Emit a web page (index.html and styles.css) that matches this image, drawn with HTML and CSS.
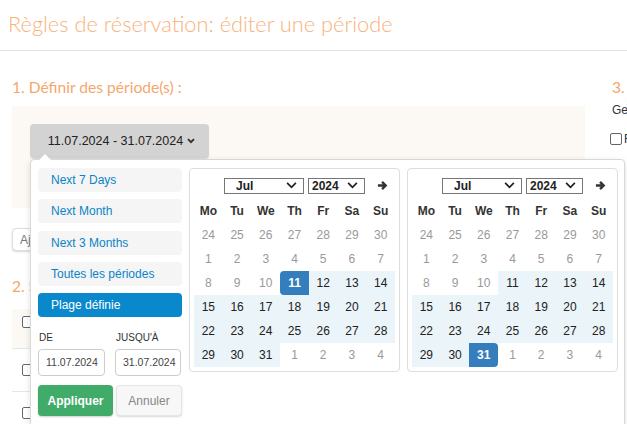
FILE: index.html
```html
<!DOCTYPE html>
<html lang="fr">
<head>
<meta charset="utf-8">
<title>Règles de réservation</title>
<link rel="stylesheet" href="styles.css">
</head>
<body>
<header class="page-head">
  <h1 class="page-title">Règles de réservation: éditer une période</h1>
</header>
<div class="main">
  <div class="col-left">
    <h2 class="step">1. Définir des période(s) :</h2>
    <div class="panel">
      <button class="date-btn">11.07.2024 - 31.07.2024 <svg class="caret" viewBox="0 0 10 8" width="8" height="6"><path d="M1 1.5 L5 5.5 L9 1.5" fill="none" stroke="#333" stroke-width="2.6"/></svg></button>
    </div>
    <button class="add-btn">Ajouter</button>
    <h2 class="step step2">2. Sélectionner</h2>
    <div class="table">
      <div class="trow thead"><span class="cb"></span></div>
      <div class="trow"><span class="cb"></span></div>
      <div class="trow"><span class="cb"></span></div>
    </div>
  </div>
  <div class="col-right">
    <h2 class="step">3.</h2>
    <p class="gen">Ge</p>
    <label class="chk"><span class="cb"></span>F</label>
  </div>

  <div class="picker">
    <div class="ranges">
      <ul class="range-list">
        <li class="range">Next 7 Days</li>
        <li class="range">Next Month</li>
        <li class="range">Next 3 Months</li>
        <li class="range">Toutes les périodes</li>
        <li class="range active">Plage définie</li>
      </ul>
      <div class="inputs">
        <div class="field"><span class="lbl">DE</span><span class="inp">11.07.2024</span></div>
        <div class="field"><span class="lbl">JUSQU'À</span><span class="inp">31.07.2024</span></div>
      </div>
      <div class="actions">
        <button class="btn-apply">Appliquer</button>
        <button class="btn-cancel">Annuler</button>
      </div>
    </div>

    <div class="cal">
      <div class="cal-head">
        <span class="sel sel-month">Jul<svg class="sel-chev" viewBox="0 0 12 8" width="11" height="7"><path d="M1 1 L6 6 L11 1" fill="none" stroke="#222" stroke-width="2"/></svg></span>
        <span class="sel sel-year">2024<svg class="sel-chev" viewBox="0 0 12 8" width="11" height="7"><path d="M1 1 L6 6 L11 1" fill="none" stroke="#222" stroke-width="2"/></svg></span>
        <svg class="next" viewBox="0 0 12 12" width="11" height="11"><path d="M1 6 H9 M5.5 2 L9.5 6 L5.5 10" fill="none" stroke="#333" stroke-width="2.6" stroke-linejoin="miter"/></svg>
      </div>
      <div class="grid">
        <span class="dow">Mo</span><span class="dow">Tu</span><span class="dow">We</span><span class="dow">Th</span><span class="dow">Fr</span><span class="dow">Sa</span><span class="dow">Su</span>
        <span class="d off">24</span><span class="d off">25</span><span class="d off">26</span><span class="d off">27</span><span class="d off">28</span><span class="d off">29</span><span class="d off">30</span>
        <span class="d off">1</span><span class="d off">2</span><span class="d off">3</span><span class="d off">4</span><span class="d off">5</span><span class="d off">6</span><span class="d off">7</span>
        <span class="d off">8</span><span class="d off">9</span><span class="d off">10</span><span class="d sel-start">11</span><span class="d in">12</span><span class="d in">13</span><span class="d in">14</span>
        <span class="d in">15</span><span class="d in">16</span><span class="d in">17</span><span class="d in">18</span><span class="d in">19</span><span class="d in">20</span><span class="d in">21</span>
        <span class="d in">22</span><span class="d in">23</span><span class="d in">24</span><span class="d in">25</span><span class="d in">26</span><span class="d in">27</span><span class="d in">28</span>
        <span class="d in">29</span><span class="d in">30</span><span class="d in">31</span><span class="d off">1</span><span class="d off">2</span><span class="d off">3</span><span class="d off">4</span>
      </div>
    </div>

    <div class="cal">
      <div class="cal-head">
        <span class="sel sel-month">Jul<svg class="sel-chev" viewBox="0 0 12 8" width="11" height="7"><path d="M1 1 L6 6 L11 1" fill="none" stroke="#222" stroke-width="2"/></svg></span>
        <span class="sel sel-year">2024<svg class="sel-chev" viewBox="0 0 12 8" width="11" height="7"><path d="M1 1 L6 6 L11 1" fill="none" stroke="#222" stroke-width="2"/></svg></span>
        <svg class="next" viewBox="0 0 12 12" width="11" height="11"><path d="M1 6 H9 M5.5 2 L9.5 6 L5.5 10" fill="none" stroke="#333" stroke-width="2.6" stroke-linejoin="miter"/></svg>
      </div>
      <div class="grid">
        <span class="dow">Mo</span><span class="dow">Tu</span><span class="dow">We</span><span class="dow">Th</span><span class="dow">Fr</span><span class="dow">Sa</span><span class="dow">Su</span>
        <span class="d off">24</span><span class="d off">25</span><span class="d off">26</span><span class="d off">27</span><span class="d off">28</span><span class="d off">29</span><span class="d off">30</span>
        <span class="d off">1</span><span class="d off">2</span><span class="d off">3</span><span class="d off">4</span><span class="d off">5</span><span class="d off">6</span><span class="d off">7</span>
        <span class="d off">8</span><span class="d off">9</span><span class="d off">10</span><span class="d in">11</span><span class="d in">12</span><span class="d in">13</span><span class="d in">14</span>
        <span class="d in">15</span><span class="d in">16</span><span class="d in">17</span><span class="d in">18</span><span class="d in">19</span><span class="d in">20</span><span class="d in">21</span>
        <span class="d in">22</span><span class="d in">23</span><span class="d in">24</span><span class="d in">25</span><span class="d in">26</span><span class="d in">27</span><span class="d in">28</span>
        <span class="d in">29</span><span class="d in">30</span><span class="d sel-end">31</span><span class="d off">1</span><span class="d off">2</span><span class="d off">3</span><span class="d off">4</span>
      </div>
    </div>
  </div>
</div>
</body>
</html>
```

FILE: styles.css
```css
* { box-sizing: border-box; }
html, body { margin: 0; padding: 0; background: #fff; }
body {
  font-family: "Liberation Sans", Arial, sans-serif;
  color: #333;
  width: 627px;
  height: 424px;
  overflow: hidden;
  position: relative;
}

.page-head {
  height: 51px;
  border-bottom: 1px solid #e3e3e3;
  padding: 12px 8px 0;
}
.page-title {
  margin: 0;
  font-family: Lato, "Open Sans", sans-serif;
  font-weight: 300;
  font-size: 21.8px;
  line-height: 24px;
  color: #f8b27c;
  white-space: nowrap;
}

.main {
  display: flex;
  gap: 27px;
  padding: 26px 0 0 12px;
}
.col-left { width: 573px; flex: none; }
.col-right { flex: none; width: 15px; }

.step {
  margin: 0 0 8px;
  font-family: Lato, "Open Sans", sans-serif;
  font-weight: 400;
  font-size: 15.6px;
  line-height: 21px;
  color: #f6a76c;
  white-space: nowrap;
}

.panel {
  height: 102px;
  background: #fcf8f4;
  padding: 18px;
}
.date-btn {
  display: flex;
  align-items: center;
  justify-content: center;
  gap: 3px;
  width: 179px;
  height: 34px;
  border: 0;
  border-radius: 4px;
  background: #d3d3d3;
  color: #222;
  font-family: "Liberation Sans", Arial, sans-serif;
  font-size: 12.5px;
  padding: 0 0 0 4px;
  box-shadow: 0 1px 1px rgba(0,0,0,0.12);
}
.caret { margin-left: 1px; }

.add-btn {
  display: block;
  margin-top: 20px;
  height: 23px;
  width: 70px;
  border: 1px solid #ddd;
  border-radius: 4px;
  background: #fff;
  color: #777;
  font-family: "Liberation Sans", Arial, sans-serif;
  font-size: 12px;
  text-align: left;
  padding: 0 0 0 7px;
  box-shadow: 0 1px 2px rgba(0,0,0,0.15);
}
.step2 { margin: 25px 0 0; }

.table { margin-top: 12px; }
.trow {
  height: 43px;
  border-top: 1px solid #e6e6e6;
  padding: 13px 0 0 10px;
}
.trow.thead { height: 39px; border-top: 0; background: #fcf8f4; padding-top: 5px; }
.cb {
  display: inline-block;
  width: 12px;
  height: 12px;
  border: 1px solid #666;
  border-radius: 2px;
  background: #fff;
  flex: none;
}

.col-right .step { margin-bottom: 5px; }
.gen {
  margin: 0;
  font-size: 12px;
  line-height: 14px;
  color: #333;
  white-space: nowrap;
}
.chk {
  display: flex;
  align-items: center;
  gap: 2px;
  margin-top: 15px;
  margin-left: -2px;
  font-size: 12px;
  color: #333;
}

/* ---------- picker ---------- */
.picker {
  position: absolute;
  left: 30px;
  top: 159px;
  width: 595px;
  height: 275px;
  background: #fff;
  border: 1px solid #d8d8d8;
  border-radius: 4px;
  box-shadow: 0 2px 6px rgba(0,0,0,0.12);
  padding: 8px 7px;
  display: flex;
  align-items: flex-start;
  gap: 7px;
}
.picker::before {
  content: "";
  position: absolute;
  top: -7px;
  left: 7px;
  border-left: 7px solid transparent;
  border-right: 7px solid transparent;
  border-bottom: 7px solid #d0d0d0;
}
.picker::after {
  content: "";
  position: absolute;
  top: -6px;
  left: 8px;
  border-left: 6px solid transparent;
  border-right: 6px solid transparent;
  border-bottom: 6px solid #fff;
}

.ranges { width: 144px; flex: none; }
.range-list { list-style: none; margin: 0; padding: 0; }
.range {
  height: 24px;
  line-height: 24px;
  margin-bottom: 7.25px;
  padding-left: 13px;
  background: #f5f5f5;
  border-radius: 4px;
  color: #0a84c6;
  font-size: 12px;
}
.range.active { background: #0a88cc; color: #fff; }

.inputs {
  display: flex;
  gap: 10px;
  margin-top: 15px;
}
.field { display: flex; flex-direction: column; }
.lbl {
  font-size: 10px;
  line-height: 12px;
  color: #333;
  margin-bottom: 5px;
  padding-left: 1px;
}
.inp {
  display: block;
  width: 67px;
  height: 27px;
  border: 1px solid #ccc;
  border-radius: 4px;
  font-size: 10.5px;
  line-height: 25px;
  padding-left: 7px;
  color: #444;
}
.field + .field .inp { width: 66px; }

.actions { display: flex; gap: 3px; margin-top: 9px; }
.btn-apply, .btn-cancel {
  height: 31px;
  border-radius: 4px;
  font-family: "Liberation Sans", Arial, sans-serif;
  font-size: 12px;
  padding: 0;
}
.btn-apply {
  width: 75px;
  border: 0;
  background: #41ab6a;
  color: #fff;
  font-weight: bold;
  box-shadow: 0 1px 2px rgba(0,0,0,0.2);
}
.btn-cancel {
  width: 66px;
  border: 1px solid #e6e6e6;
  background: #f7f7f7;
  color: #888;
  box-shadow: 0 1px 2px rgba(0,0,0,0.15);
}

.cal {
  width: 211px;
  flex: none;
  border: 1px solid #ddd;
  border-radius: 4px;
  padding: 4px;
}
.cal-head {
  display: flex;
  align-items: center;
  height: 25px;
  padding: 0 0 0 30px;
}
.sel {
  display: flex;
  align-items: center;
  justify-content: space-between;
  height: 16px;
  border: 1px solid #767676;
  padding: 0 6px 0 6px;
  font-size: 12px;
  font-weight: bold;
  color: #222;
}
.sel-month { width: 80px; padding-left: 11px; }
.sel-year { width: 57px; margin-left: 4px; padding-left: 3px; }
.next { margin-left: 12px; }

.grid {
  display: grid;
  grid-template-columns: repeat(7, 1fr);
  grid-auto-rows: 24px;
  margin-top: 1px;
}
.dow, .d {
  display: flex;
  align-items: center;
  justify-content: center;
  font-size: 12px;
}
.dow { font-weight: bold; color: #333; height: 23px; }
.grid .dow { margin-bottom: 1px; }
.d { color: #222; }
.d.off { color: #999; }
.d.in { background: #ebf4f8; }
.d.sel-start {
  background: #357ebd;
  color: #fff;
  font-weight: bold;
  border-radius: 4px 0 0 4px;
}
.d.sel-end {
  background: #357ebd;
  color: #fff;
  font-weight: bold;
  border-radius: 0 4px 4px 0;
}
```
